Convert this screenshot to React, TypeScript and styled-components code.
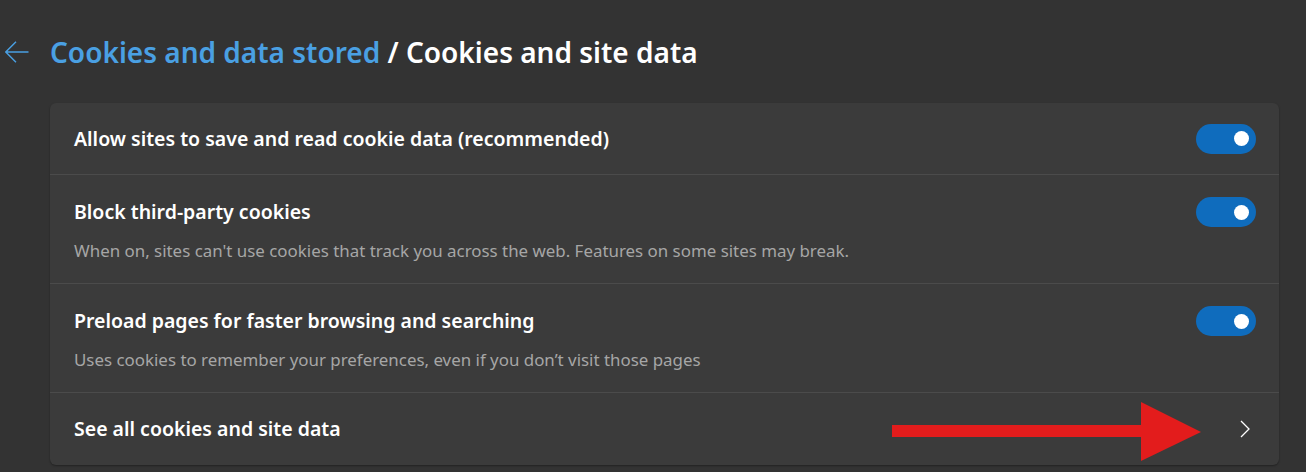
import styled, { createGlobalStyle } from "styled-components";

const GlobalStyle = createGlobalStyle`
  html, body {
    margin: 0;
    padding: 0;
    background: #333333;
  }
  body {
    font-family: "Noto Sans", "Open Sans", sans-serif;
    color: #ffffff;
  }
`;

const Page = styled.div`
  position: relative;
  width: 1306px;
  height: 472px;
  overflow: hidden;
`;

const Header = styled.div`
  display: flex;
  align-items: center;
  height: 103px;
  padding-left: 5px;
  box-sizing: border-box;
`;

const BackButton = styled.button`
  display: flex;
  align-items: center;
  justify-content: center;
  width: 24px;
  height: 24px;
  padding: 0;
  margin-right: 21px;
  border: none;
  background: transparent;
  cursor: pointer;
`;

const Title = styled.h1`
  margin: 0;
  font-size: 28px;
  font-weight: 600;
  color: #ffffff;
`;

const Crumb = styled.span`
  color: #4aa0e3;
`;

const Card = styled.div`
  margin-left: 50px;
  width: 1229px;
  background: #3b3b3b;
  border-radius: 6px;
  box-shadow: 0 1px 2px rgba(0, 0, 0, 0.35);
`;

const Row = styled.div<{ $tall?: boolean }>`
  display: flex;
  align-items: ${(p) => (p.$tall ? "flex-start" : "center")};
  justify-content: space-between;
  box-sizing: border-box;
  height: ${(p) => (p.$tall ? "109px" : "72px")};
  padding: ${(p) => (p.$tall ? "22px 23px 0 24px" : "0 23px 0 24px")};

  &:not(:last-child) {
    border-bottom: 1px solid #4b4b4b;
  }
`;

const Text = styled.div`
  display: flex;
  flex-direction: column;
  gap: 13px;
  padding-top: 1px;
`;

const RowTitle = styled.div`
  font-size: 19.5px;
  font-weight: 600;
  color: #ffffff;
  line-height: 28px;
`;

const Description = styled.div`
  font-size: 16.9px;
  color: #a6a6a6;
  line-height: 24px;
`;

const Toggle = styled.div<{ $on: boolean }>`
  position: relative;
  flex: none;
  width: 60px;
  height: 30px;
  border-radius: 15px;
  background: ${(p) => (p.$on ? "#0f6cbd" : "transparent")};

  &::after {
    content: "";
    position: absolute;
    top: 7.5px;
    right: 7px;
    width: 15px;
    height: 15px;
    border-radius: 50%;
    background: #ffffff;
  }
`;

const ChevronWrap = styled.div`
  display: flex;
  margin-right: 6px;
`;

const Annotation = styled.svg`
  position: absolute;
  left: 892px;
  top: 402px;
  pointer-events: none;
`;

const rows = [
  {
    title: "Allow sites to save and read cookie data (recommended)",
  },
  {
    title: "Block third-party cookies",
    description:
      "When on, sites can't use cookies that track you across the web. Features on some sites may break.",
  },
  {
    title: "Preload pages for faster browsing and searching",
    description:
      "Uses cookies to remember your preferences, even if you don\u2019t visit those pages",
  },
];

export default function App() {
  return (
    <Page>
      <GlobalStyle />
      <Header>
        <BackButton aria-label="Back">
          <svg width="24" height="22" viewBox="0 0 24 22" fill="none">
            <path
              d="M23.5 11H1M11 0.8L0.8 11L11 21.2"
              stroke="#4aa0e3"
              strokeWidth="1.4"
            />
          </svg>
        </BackButton>
        <Title>
          <Crumb>Cookies and data stored</Crumb> / Cookies and site data
        </Title>
      </Header>
      <Card>
        {rows.map((row) => (
          <Row key={row.title} $tall={!!row.description}>
            <Text>
              <RowTitle>{row.title}</RowTitle>
              {row.description && <Description>{row.description}</Description>}
            </Text>
            <Toggle $on role="switch" aria-checked />
          </Row>
        ))}
        <Row>
          <RowTitle>See all cookies and site data</RowTitle>
          <ChevronWrap>
            <svg width="10" height="18" viewBox="0 0 10 18" fill="none">
              <path d="M1 1L9 9L1 17" stroke="#ffffff" strokeWidth="1.3" />
            </svg>
          </ChevronWrap>
        </Row>
      </Card>
      <Annotation width="310" height="60" viewBox="0 0 310 60">
        <rect x="0" y="23" width="252" height="12" fill="#e31c1c" />
        <polygon points="249,0 309,30 249,59" fill="#e31c1c" />
      </Annotation>
    </Page>
  );
}
